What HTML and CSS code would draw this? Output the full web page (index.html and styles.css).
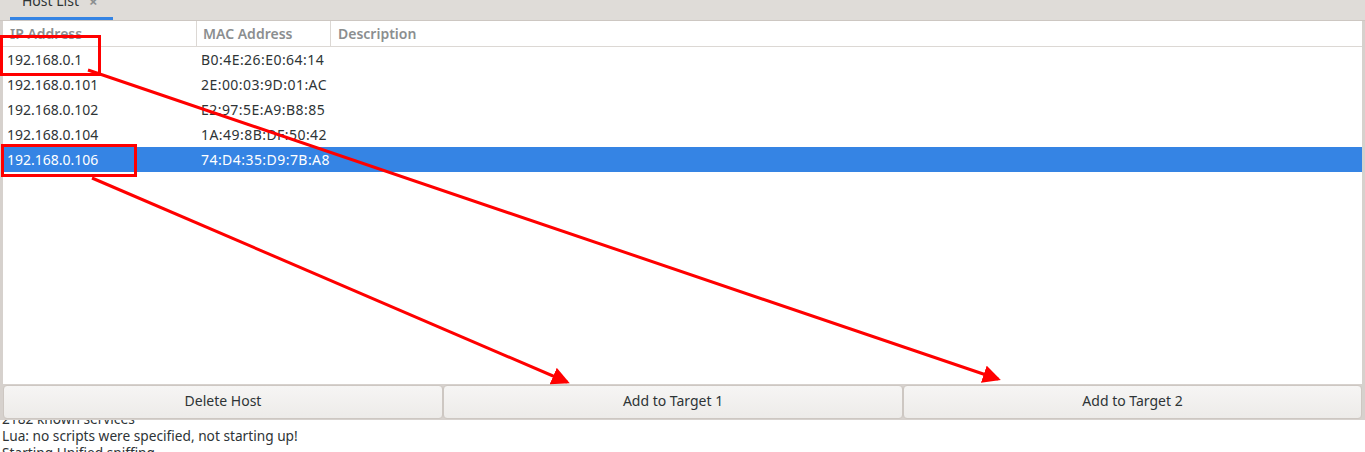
FILE: index.html
```html
<!DOCTYPE html>
<html>
<head>
<meta charset="utf-8">
<link rel="stylesheet" href="styles.css">
</head>
<body>
<div class="app">
  <div class="tabbar">
    <div class="tab"><span class="tab-label">Host List</span><span class="tab-close">×</span></div>
  </div>
  <div class="panel">
    <div class="table">
      <div class="thead">
        <div class="th c1">IP Address</div>
        <div class="th c2">MAC Address</div>
        <div class="th c3">Description</div>
      </div>
      <div class="tbody">
        <div class="tr"><div class="td c1">192.168.0.1</div><div class="td c2">B0:4E:26:E0:64:14</div><div class="td c3"></div></div>
        <div class="tr"><div class="td c1">192.168.0.101</div><div class="td c2">2E:00:03:9D:01:AC</div><div class="td c3"></div></div>
        <div class="tr"><div class="td c1">192.168.0.102</div><div class="td c2">E2:97:5E:A9:B8:85</div><div class="td c3"></div></div>
        <div class="tr"><div class="td c1">192.168.0.104</div><div class="td c2">1A:49:8B:DF:50:42</div><div class="td c3"></div></div>
        <div class="tr selected"><div class="td c1">192.168.0.106</div><div class="td c2">74:D4:35:D9:7B:A8</div><div class="td c3"></div></div>
      </div>
    </div>
    <div class="buttons">
      <button class="btn b1">Delete Host</button>
      <button class="btn b2">Add to Target 1</button>
      <button class="btn b3">Add to Target 2</button>
    </div>
  </div>
  <div class="console">
    <div class="line first">2182 known services</div>
    <div class="line">Lua: no scripts were specified, not starting up!</div>
    <div class="line">Starting Unified sniffing...</div>
  </div>
</div>
<svg class="annot" width="1365" height="452" viewBox="0 0 1365 452">
  <defs>
    <marker id="ah" markerWidth="6" markerHeight="6" refX="5" refY="3" orient="auto" markerUnits="strokeWidth">
      <path d="M0,0 L6,3 L0,6 Z" fill="#ff0000"/>
    </marker>
  </defs>
  <rect x="1.5" y="36.5" width="98" height="38" fill="none" stroke="#ff0000" stroke-width="3"/>
  <rect x="2.5" y="145.5" width="133" height="30" fill="none" stroke="#ff0000" stroke-width="3"/>
  <line x1="88" y1="70" x2="998" y2="379" stroke="#ff0000" stroke-width="3" marker-end="url(#ah)"/>
  <line x1="92" y1="178" x2="567" y2="382" stroke="#ff0000" stroke-width="3" marker-end="url(#ah)"/>
</svg>
</body>
</html>
```
FILE: styles.css
```css
* { box-sizing: border-box; }
html, body { margin: 0; padding: 0; }
body {
  width: 1365px;
  height: 452px;
  overflow: hidden;
  background: #ffffff;
  font-family: "Noto Sans", "DejaVu Sans", sans-serif;
  font-size: 14px;
  color: #2e3436;
  position: relative;
}
.app { display: flex; flex-direction: column; height: 452px; }
.tabbar {
  height: 21px;
  background: #dfdcd8;
  border-bottom: 1px solid #cdc7c2;
  display: flex;
  padding-left: 10px;
  overflow: hidden;
}
.tab {
  display: flex;
  align-items: flex-start;
  gap: 10px;
  width: 103px;
  height: 20px;
  padding-left: 12px;
  border-bottom: 3px solid #3584e4;
}
.tab-label { line-height: 14px; margin-top: -6px; color: #2e3436; }
.tab-close { line-height: 14px; margin-top: -6px; color: #8b8e8f; font-size: 15px; font-weight: bold; }
.panel {
  display: flex;
  flex-direction: column;
  height: 399px;
  border-left: 3px solid #d6d1cd;
  border-right: 3px solid #d6d1cd;
}
.table { flex: 1; display: flex; flex-direction: column; background: #fff; }
.thead {
  display: flex;
  height: 26px;
  border-bottom: 1px solid #dcd8d4;
}
.th {
  color: #8b8e8f;
  font-weight: 600;
  line-height: 25px;
  padding-left: 7px;
  border-right: 1px solid #dcd8d4;
}
.th.c2 { padding-left: 6px; }
.th.c3 { border-right: none; flex: 1; }
.c1 { width: 194px; }
.c2 { width: 134px; }
.c3 { flex: 1; }
.tr { display: flex; height: 25px; }
.td { line-height: 25px; padding-left: 4px; white-space: nowrap; }
.td.c2 { letter-spacing: 0.45px; }
.tr.selected { background: #3584e4; color: #ffffff; }
.buttons {
  display: flex;
  height: 36px;
  background: #d6d1cd;
  padding: 1px 0 1px 0;
}
.btn {
  font-family: inherit;
  font-size: 14px;
  color: #2e3436;
  background: linear-gradient(#f6f5f4, #edebe9);
  border: 1px solid #cdc7c2;
  border-radius: 4px;
  margin: 0;
  padding: 0 0 3px 0;
  height: 34px;
}
.b1 { flex: 440 1 0; }
.b2 { flex: 460 1 0; }
.b3 { flex: 459 1 0; }
.console {
  flex: 1;
  overflow: hidden;
  padding-left: 2px;
  font-size: 13.7px;
}
.line { line-height: 17px; white-space: nowrap; }
.line.first { margin-top: -10px; }
.annot { position: absolute; left: 0; top: 0; pointer-events: none; }
```
